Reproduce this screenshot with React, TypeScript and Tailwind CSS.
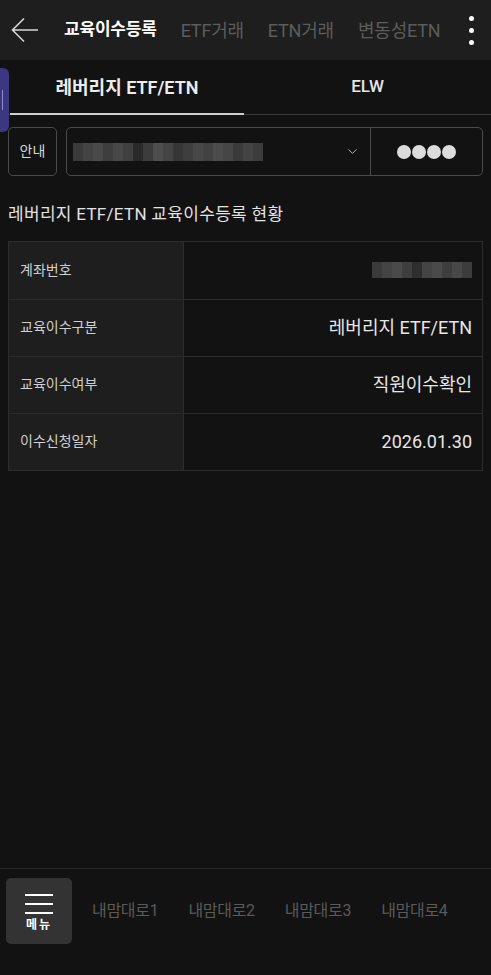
import { ChevronDown } from 'lucide-react';

const font = { fontFamily: 'Roboto, "Noto Sans CJK KR", "Noto Sans", sans-serif' };

const rows = [
  { label: '계좌번호', value: null },
  { label: '교육이수구분', value: '레버리지 ETF/ETN' },
  { label: '교육이수여부', value: '직원이수확인' },
  { label: '이수신청일자', value: '2026.01.30' },
];

// masked account number, drawn as mosaic blocks
const Mosaic = ({ cells, h }: { cells: string[]; h: string }) => (
  <div className={`flex ${h} blur-[0.6px]`}>
    {cells.map((c, i) => (
      <div key={i} className="w-[10px] h-full" style={{ backgroundColor: c }} />
    ))}
  </div>
);

const acctCells = [
  '#3a3a3a', '#444', '#4a4a4a', '#3e3e3e', '#484848', '#404040', '#2a2a2a', '#3c3c3c', '#4e4e4e', '#444',
  '#363636', '#3e3e3e', '#474747', '#424242', '#4c4c4c', '#464646', '#3a3a3a', '#444', '#3c3c3c',
];
const tableCells = ['#3a3a3a', '#444', '#4a4a4a', '#3e3e3e', '#2e2e2e', '#444', '#4a4a4a', '#3e3e3e', '#484848', '#3c3c3c'];

export default function App() {
  return (
    <div className="w-[491px] h-[975px] bg-[#121212] flex flex-col text-white overflow-hidden" style={font}>
      {/* header */}
      <div className="h-[60px] bg-[#1e1e1e] flex items-center shrink-0">
        <div className="w-[50px] pl-[11px] flex items-center">
          <svg width="28" height="26" viewBox="0 0 28 26" fill="none" stroke="#d6d6d6" strokeWidth="1.6">
            <path d="M27 13H2M13 1.5L1.5 13L13 24.5" />
          </svg>
        </div>
        <div className="flex items-center gap-[24px] ml-[14px] tracking-[-0.2px]">
          <span className="text-[17px] font-bold text-white">교육이수등록</span>
          <span className="text-[18px] text-[#5c5c5c]">ETF거래</span>
          <span className="text-[18px] text-[#5c5c5c]">ETN거래</span>
          <span className="text-[18px] text-[#5c5c5c]">변동성ETN</span>
        </div>
        <div className="ml-auto mr-[17px] flex flex-col gap-[7px]">
          <span className="w-[5px] h-[5px] rounded-full bg-white" />
          <span className="w-[5px] h-[5px] rounded-full bg-white" />
          <span className="w-[5px] h-[5px] rounded-full bg-white" />
        </div>
      </div>

      {/* sub tabs */}
      <div className="relative h-[55px] flex shrink-0 border-b border-[#3a3a3a]">
        <div className="absolute left-0 top-[8px] w-[9px] h-[64px] bg-[#3d3680] rounded-r-[6px] flex items-center">
          <span className="ml-[2px] w-px h-[20px] bg-[#8f88c8]" />
        </div>
        <div className="w-[234px] ml-[10px] flex items-center justify-center text-[18px] font-semibold text-[#ececec] relative">
          레버리지 ETF/ETN
          <span className="absolute left-0 right-0 -bottom-px h-[2px] bg-[#cfcfcf]" />
        </div>
        <div className="flex-1 flex items-center justify-center text-[17px] font-medium text-[#e6e6e6]">ELW</div>
      </div>

      {/* account selector */}
      <div className="flex gap-[9px] px-[8px] pt-[12px] shrink-0">
        <div className="w-[49px] h-[49px] border border-[#4a4a4a] rounded-[5px] flex items-center justify-center text-[14px] text-[#d8d8d8]">
          안내
        </div>
        <div className="flex-1 h-[49px] border border-[#4a4a4a] rounded-[5px] flex">
          <div className="flex-1 flex items-center pl-[6px] pr-[10px] border-r border-[#4a4a4a]">
            <Mosaic cells={acctCells} h="h-[18px]" />
            <ChevronDown className="ml-auto text-[#bdbdbd]" size={15} strokeWidth={1.5} />
          </div>
          <div className="w-[111px] flex items-center justify-center gap-[1px]">
            {[0, 1, 2, 3].map((i) => (
              <span key={i} className="w-[14px] h-[14px] rounded-full bg-[#dcdcdc]" />
            ))}
          </div>
        </div>
      </div>

      <div className="px-[8px] pt-[26px] pb-[13px] text-[17px] text-[#e2e2e2] tracking-[0.3px] shrink-0">
        레버리지 ETF/ETN 교육이수등록 현황
      </div>

      {/* status table */}
      <div className="mx-[8px] border border-[#2c2c2c] shrink-0">
        {rows.map((r, i) => (
          <div key={r.label} className={`flex h-[57px] ${i > 0 ? 'border-t border-[#2c2c2c]' : ''}`}>
            <div className="w-[175px] bg-[#1e1e1e] border-r border-[#2c2c2c] flex items-center pl-[11px] text-[14px] text-[#d0d0d0]">
              {r.label}
            </div>
            <div className="flex-1 flex items-center justify-end pr-[10px] text-[18px] text-[#e6e6e6]">
              {r.value ?? <Mosaic cells={tableCells} h="h-[16px]" />}
            </div>
          </div>
        ))}
      </div>

      <div className="flex-1" />

      {/* bottom bar */}
      <div className="h-[107px] border-t border-[#262626] flex items-start pt-[9px] pl-[6px] shrink-0">
        <div className="w-[66px] h-[66px] bg-[#333333] rounded-[5px] flex flex-col items-center justify-center">
          <div className="flex flex-col gap-[7px] mt-[2px]">
            <span className="w-[28px] h-[2px] bg-white" />
            <span className="w-[28px] h-[2px] bg-white" />
            <span className="w-[28px] h-[2px] bg-white" />
          </div>
          <span className="mt-[5px] text-[12px] font-bold text-white tracking-[2px] leading-none">메뉴</span>
        </div>
        <div className="flex items-center h-[66px] ml-[20px] gap-[30px] text-[16px] text-[#5a5a5a] tracking-[-0.3px]">
          <span>내맘대로1</span>
          <span>내맘대로2</span>
          <span>내맘대로3</span>
          <span>내맘대로4</span>
        </div>
      </div>
    </div>
  );
}
